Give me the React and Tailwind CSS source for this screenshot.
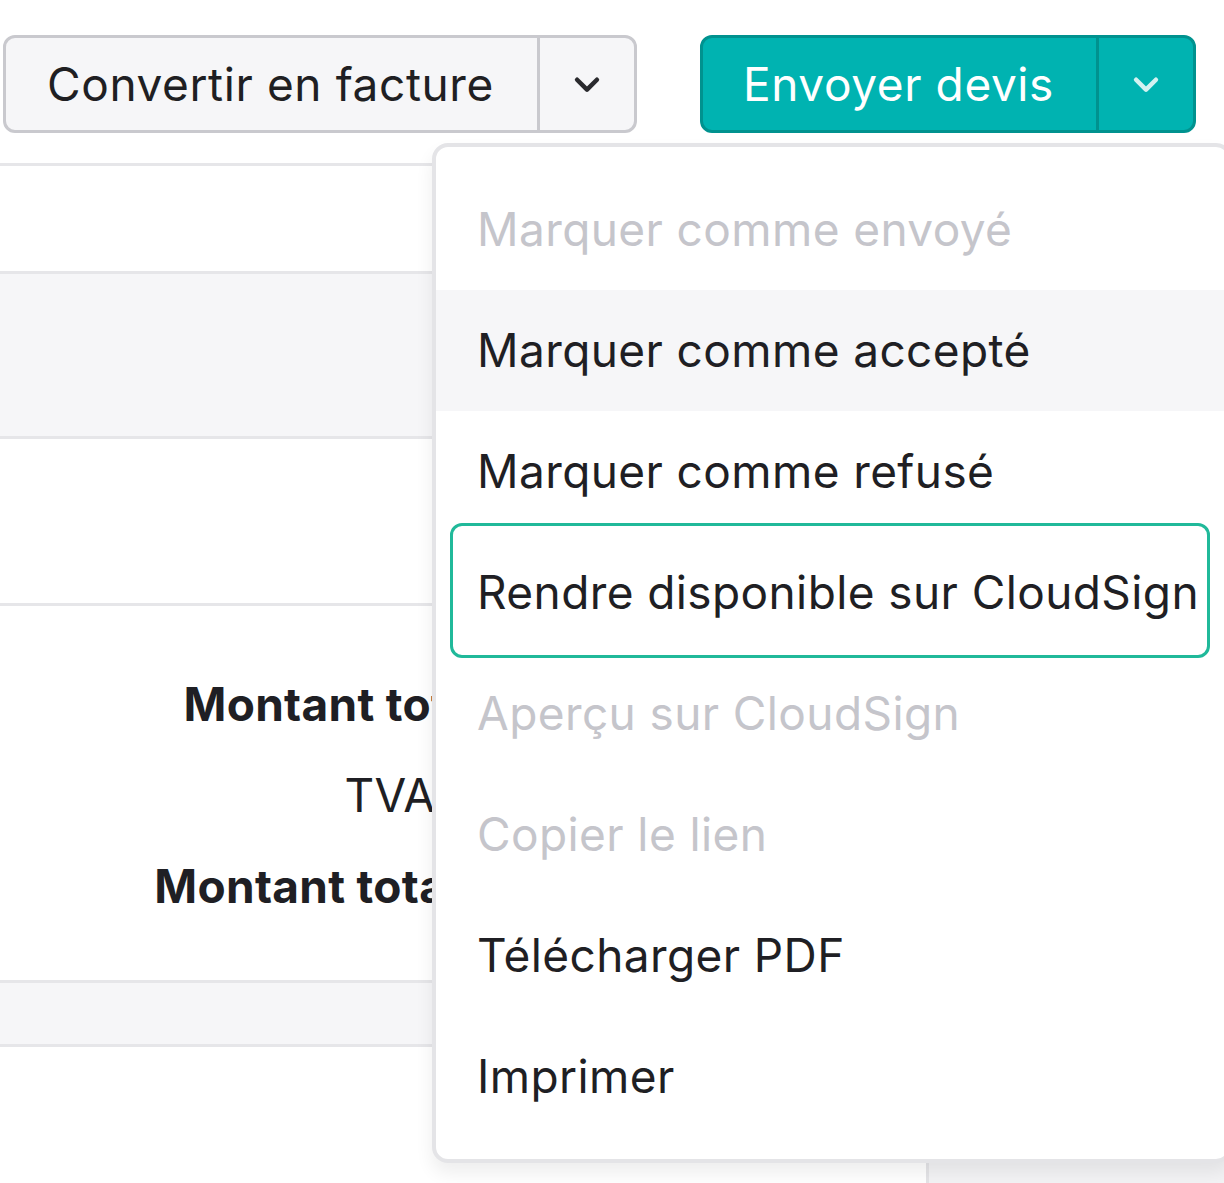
import React from 'react';

const Chevron = ({ className }) => (
    <svg viewBox="0 0 24 24" className={className} fill="none" stroke="currentColor" strokeWidth="3.2" strokeLinecap="round" strokeLinejoin="round">
        <path d="M5 9l7 7 7-7" />
    </svg>
);

const items = [
    { label: 'Marquer comme envoyé', disabled: true },
    { label: 'Marquer comme accepté', hover: true },
    { label: 'Marquer comme refusé' },
    { label: 'Rendre disponible sur CloudSign', focus: true },
    { label: 'Aperçu sur CloudSign', disabled: true },
    { label: 'Copier le lien', disabled: true },
    { label: 'Télécharger PDF' },
    { label: 'Imprimer' },
];

const App = () => {
    return (
        <div className="relative w-[1224px] h-[1183px] overflow-hidden bg-white text-[#1f1f24]" style={{ fontFamily: 'Inter, "Noto Sans", sans-serif' }}>
            {/* Action buttons */}
            <div className="flex items-start gap-[63px] pl-[3px] pt-[35px]">
                <div className="flex h-[98px] w-[634px] rounded-[12px] border-[3px] border-[#c9c9ce] bg-[#f6f6f8]">
                    <button className="flex-1 text-left pl-[41px] text-[46px] tracking-[0.6px] text-[#1f1f23]">Convertir en facture</button>
                    <div className="w-[3px] bg-[#c9c9ce]" />
                    <button className="w-[94px] flex items-center justify-center text-[#2a2a2e]">
                        <Chevron className="w-[34px] h-[34px]" />
                    </button>
                </div>
                <div className="flex h-[98px] w-[496px] rounded-[12px] border-[3px] border-[#00928f] bg-[#00b3b1]">
                    <button className="flex-1 text-left pl-[40px] text-[46px] tracking-[0.6px] text-white">Envoyer devis</button>
                    <div className="w-[3px] bg-[#00928f]" />
                    <button className="w-[94px] flex items-center justify-center text-[#d4f2f1]">
                        <Chevron className="w-[34px] h-[34px]" />
                    </button>
                </div>
            </div>

            {/* Document table behind the menu */}
            <div className="mt-[30px]">
                <div className="h-[108px] border-t-[3px] border-[#e6e6e9]" />
                <div className="h-[165px] border-t-[3px] border-[#e6e6e9] bg-[#f6f6f8]" />
                <div className="h-[167px] border-t-[3px] border-[#e6e6e9]" />
                <div className="h-[377px] border-t-[3px] border-[#e6e6e9] pt-[75px]">
                    <div className="w-[565px] flex flex-col items-end gap-[45px] text-[46px] leading-[46px] tracking-[0.3px]">
                        <div className="font-bold whitespace-nowrap">Montant total HT</div>
                        <div className="whitespace-nowrap">TVA 20 %</div>
                        <div className="font-bold whitespace-nowrap">Montant total TTC</div>
                    </div>
                </div>
                <div className="h-[67px] border-t-[3px] border-b-[3px] border-[#e6e6e9] bg-[#f6f6f8]" />
                <div className="flex h-[140px]">
                    <div className="w-[926px]" />
                    <div className="flex-1 mt-[108px] border-l-[3px] border-[#e4e4e7] bg-[#f3f3f5]" />
                </div>
            </div>

            {/* Dropdown menu */}
            <div className="absolute left-[432px] top-[143px] w-[800px] rounded-[16px] border-[4px] border-[#e4e4e7] bg-white py-[22px] shadow-[0_10px_18px_rgba(0,0,0,0.07)]">
                {items.map((item) => (
                    <div
                        key={item.label}
                        className={`relative h-[121px] flex items-center pl-[41px] text-[46px] tracking-[0.4px] whitespace-nowrap ${item.hover ? 'bg-[#f6f6f8]' : ''} ${item.disabled ? 'text-[#c5c5cb]' : 'text-[#1f1f24]'}`}
                    >
                        {item.focus && (
                            <div className="absolute left-[14px] right-[18px] top-[-9px] bottom-[-5px] rounded-[12px] border-[3px] border-[#20b99a]" />
                        )}
                        <span className="relative">{item.label}</span>
                    </div>
                ))}
            </div>
        </div>
    );
};

export default App;
